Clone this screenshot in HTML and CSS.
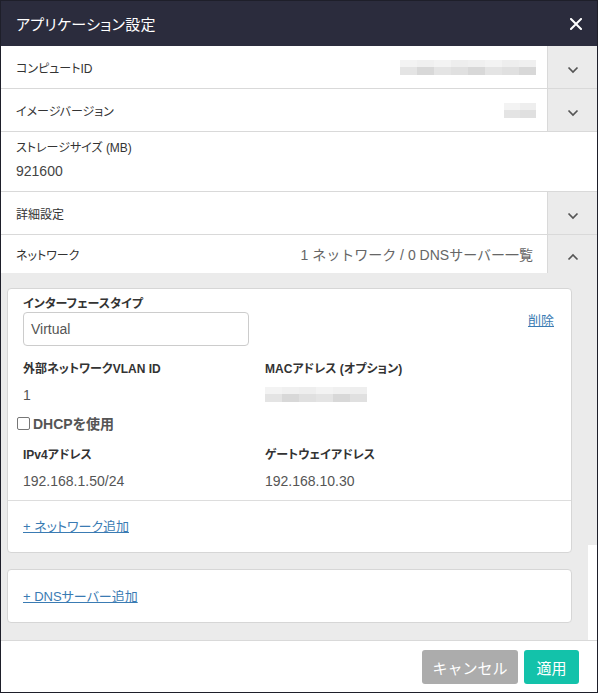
FILE: index.html
```html
<!DOCTYPE html>
<html lang="ja">
<head>
<meta charset="utf-8">
<link rel="stylesheet" href="styles.css">
</head>
<body>
<div class="dialog">
  <header class="dlg-head">
    <h1 class="dlg-title">アプリケーション設定</h1>
    <svg class="close" width="12" height="12" viewBox="0 0 12 12"><path d="M1 1L11 11M11 1L1 11" stroke="#fff" stroke-width="2" stroke-linecap="square"/></svg>
  </header>

  <div class="row">
    <div class="row-main">
      <span class="label">コンピュートID</span>
      <span class="mosaic mosaic-id"><i class="px a"></i><i class="px b"></i><i class="px a"></i><i class="px c"></i><i class="px b"></i><i class="px a"></i><i class="px c"></i><i class="px b"></i></span>
    </div>
    <div class="toggle"><svg width="12" height="8" viewBox="0 0 12 8"><path d="M1.5 1.5L6 6L10.5 1.5" fill="none" stroke="#555" stroke-width="1.7"/></svg></div>
  </div>

  <div class="row">
    <div class="row-main">
      <span class="label">イメージバージョン</span>
      <span class="mosaic mosaic-ver"><i class="px a"></i><i class="px c"></i></span>
    </div>
    <div class="toggle"><svg width="12" height="8" viewBox="0 0 12 8"><path d="M1.5 1.5L6 6L10.5 1.5" fill="none" stroke="#555" stroke-width="1.7"/></svg></div>
  </div>

  <div class="row row-static">
    <div class="field-stack">
      <span class="label">ストレージサイズ (MB)</span>
      <span class="value">921600</span>
    </div>
  </div>

  <div class="row">
    <div class="row-main">
      <span class="label">詳細設定</span>
    </div>
    <div class="toggle"><svg width="12" height="8" viewBox="0 0 12 8"><path d="M1.5 1.5L6 6L10.5 1.5" fill="none" stroke="#555" stroke-width="1.7"/></svg></div>
  </div>

  <div class="row row-open">
    <div class="row-main">
      <span class="label">ネットワーク</span>
      <span class="summary">1 ネットワーク / 0 DNSサーバー一覧</span>
    </div>
    <div class="toggle toggle-up"><svg width="12" height="8" viewBox="0 0 12 8"><path d="M1.5 6.5L6 2L10.5 6.5" fill="none" stroke="#555" stroke-width="1.7"/></svg></div>
  </div>

  <div class="panel">
    <div class="panel-content">
      <section class="card card-net">
        <div class="net-top">
          <div class="field">
            <label class="flabel">インターフェースタイプ</label>
            <div class="input">Virtual</div>
          </div>
          <a class="link del">削除</a>
        </div>
        <div class="grid">
          <div class="field">
            <div class="flabel">外部ネットワークVLAN ID</div>
            <div class="fvalue">1</div>
          </div>
          <div class="field">
            <div class="flabel">MACアドレス (オプション)</div>
            <div class="fvalue"><span class="mosaic mosaic-mac"><i class="px a"></i><i class="px b"></i><i class="px c"></i><i class="px a"></i><i class="px b"></i><i class="px c"></i></span></div>
          </div>
        </div>
        <label class="check"><span class="box"></span>DHCPを使用</label>
        <div class="grid grid-ip">
          <div class="field">
            <div class="flabel">IPv4アドレス</div>
            <div class="fvalue">192.168.1.50/24</div>
          </div>
          <div class="field">
            <div class="flabel">ゲートウェイアドレス</div>
            <div class="fvalue">192.168.10.30</div>
          </div>
        </div>
        <div class="card-foot"><a class="link">+ ネットワーク追加</a></div>
      </section>
      <section class="card card-dns">
        <a class="link">+ DNSサーバー追加</a>
      </section>
    </div>
    <div class="scrollbar"><div class="thumb"></div></div>
  </div>

  <footer class="dlg-foot">
    <button class="btn btn-cancel">キャンセル</button>
    <button class="btn btn-ok">適用</button>
  </footer>
</div>
</body>
</html>
```

FILE: styles.css
```css
* { box-sizing: border-box; }
html, body { margin: 0; padding: 0; background: #fff; }
body {
  font-family: "Liberation Sans", Arial, "Noto Sans CJK JP", sans-serif;
  font-feature-settings: "palt";
  color: #333;
}
.dialog {
  width: 598px;
  height: 693px;
  border: 1px solid #1e1f2a;
  display: flex;
  flex-direction: column;
  background: #fff;
  overflow: hidden;
}
.dlg-head {
  height: 45px;
  flex: 0 0 45px;
  background: #2b2c3d;
  display: flex;
  align-items: center;
  justify-content: space-between;
  padding: 0 15px 0 15px;
}
.dlg-title {
  margin: 0;
  font-size: 15px;
  font-weight: normal;
  color: #fff;
  letter-spacing: 0.3px;
}
.close { display: block; margin-top: 0; }

.row {
  display: flex;
  height: 43px;
  flex: 0 0 43px;
  border-bottom: 1px solid #d9d9d9;
}
.row-main {
  flex: 1;
  display: flex;
  align-items: center;
  justify-content: space-between;
  padding: 0 11px 0 15px;
}
.label { font-size: 12px; color: #333; }
.toggle {
  width: 50px;
  flex: 0 0 50px;
  background: #ebebeb;
  border-left: 1px solid #d9d9d9;
  display: flex;
  justify-content: center;
  align-items: center;
  padding-top: 6px;
}
.toggle svg { display: block; }
.row-static { height: 60px; flex-basis: 60px; }
.field-stack {
  display: flex;
  flex-direction: column;
  padding: 6px 15px 0;
  gap: 8px;
}
.value { font-size: 14px; color: #444; }
.row-open { height: 38px; flex-basis: 38px; border-bottom: none; }
.row-open .row-main { padding-right: 14px; }
.summary { font-size: 14px; color: #666; font-feature-settings: normal; }
.toggle-up { border-left: 1px solid #d9d9d9; }

.mosaic { display: inline-flex; height: 15px; }
.mosaic .px { display: block; width: 17px; height: 15px; }
.px.a { background: linear-gradient(#f3f3f3 50%, #e4e4e4 50%); }
.px.b { background: linear-gradient(#f0f0f0 50%, #d8d8d8 50%); }
.px.c { background: linear-gradient(#eeeeee 50%, #e0e0e0 50%); }
.mosaic-ver .px { width: 16px; }

.panel {
  flex: 0 0 368px;
  display: flex;
  background: #ebebeb;
  border-bottom: 1px solid #d9d9d9;
}
.panel-content {
  flex: 1;
  padding: 15px 16px 0 6px;
  display: flex;
  flex-direction: column;
  gap: 16px;
}
.scrollbar { width: 9px; flex: 0 0 9px; background: #fff; }
.thumb { height: 272px; background: #ebebeb; }

.card {
  background: #fff;
  border: 1px solid #d6d6d6;
  border-radius: 4px;
}
.card-net { height: 265px; padding: 0; }
.net-top {
  display: flex;
  justify-content: space-between;
  padding: 7px 17px 0 15px;
}
.field { display: flex; flex-direction: column; }
.flabel { font-size: 12px; font-weight: bold; color: #333; line-height: 16px; }
.input {
  margin-top: 0;
  width: 226px;
  height: 34px;
  border: 1px solid #ccc;
  border-radius: 4px;
  font-size: 14px;
  color: #555;
  padding: 0 7px;
  display: flex;
  align-items: center;
}
.link {
  font-size: 13px;
  color: #3a7bb3;
  text-decoration: underline;
  cursor: pointer;
}
.del { margin-top: 14px; }
.grid {
  display: grid;
  grid-template-columns: 242px 1fr;
  padding: 15px 15px 0;
}
.fvalue { font-size: 14px; color: #555; margin-top: 10px; line-height: 16px; height: 16px; }
.check {
  display: flex;
  align-items: center;
  font-size: 14px;
  font-weight: bold;
  color: #555;
  padding: 10px 0 0 9px;
  gap: 3px;
}
.box {
  width: 13px;
  height: 13px;
  border: 1px solid #767676;
  border-radius: 2px;
  background: #fff;
}
.grid-ip { padding-top: 14px; }
.card-foot {
  margin-top: 11px;
  border-top: 1px solid #ddd;
  padding: 15px 15px 0;
}
.card-dns { height: 54px; padding: 16px 15px 0; }

.dlg-foot {
  flex: 1;
  display: flex;
  justify-content: flex-end;
  align-items: flex-start;
  padding: 9px 18px 0 0;
  gap: 6px;
}
.btn {
  height: 34px;
  border: none;
  border-radius: 3px;
  color: #fff;
  font-family: inherit;
  font-size: 15px;
  padding: 0;
}
.btn-cancel { width: 96px; background: #acacac; }
.btn-ok { width: 55px; background: #13c2aa; }
```
